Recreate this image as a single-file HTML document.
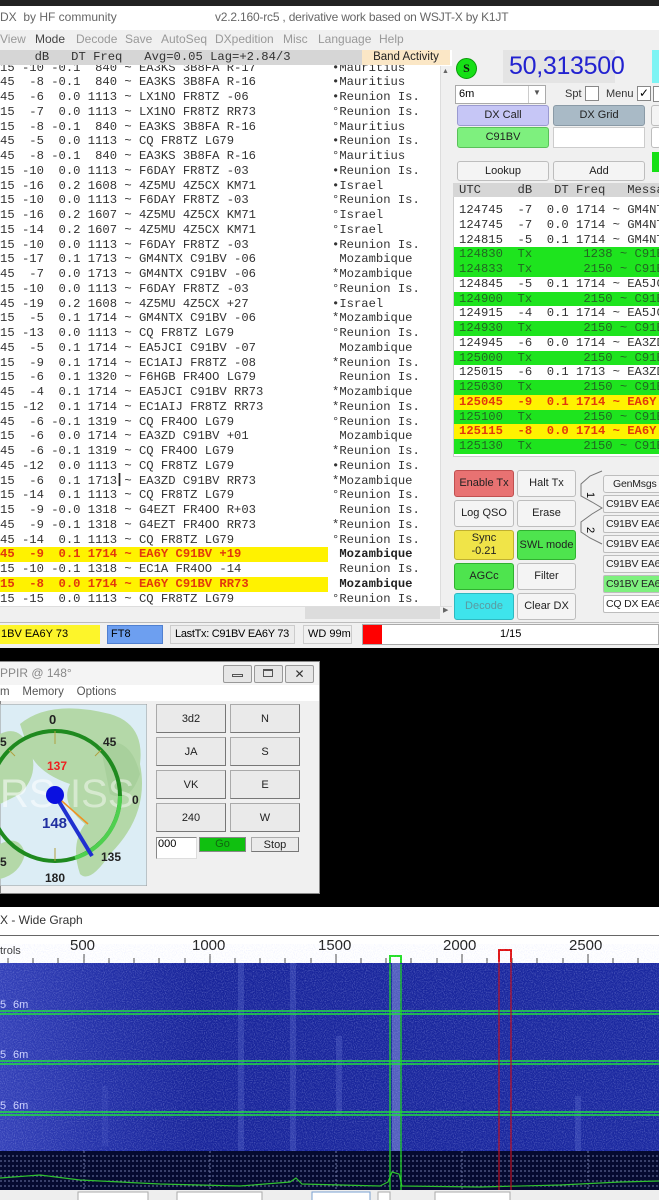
<!DOCTYPE html>
<html><head><meta charset="utf-8">
<style>
*{margin:0;padding:0;box-sizing:border-box}
body{width:659px;height:1200px;overflow:hidden;background:#000;position:relative;font-family:"Liberation Sans",sans-serif;}
.a{position:absolute;white-space:nowrap}
.mono{font-family:"Liberation Mono",monospace;font-size:12.2px;white-space:pre;color:#333;}
.mono .a{white-space:pre}
.row{position:absolute;height:14.75px;line-height:14.75px;}
.btn{position:absolute;border:1px solid #bdbdbd;border-radius:3px;background:#f4f4f4;font-size:11px;color:#222;display:flex;align-items:center;justify-content:center;text-align:center;line-height:13px;white-space:nowrap;overflow:hidden}
.gm{font-size:10.5px;letter-spacing:-0.2px}
.wb{position:absolute;background:#eaeaea;border:1px solid #aaa;border-right-color:#777;border-bottom-color:#777;font-size:11px;display:flex;align-items:center;justify-content:center;color:#222}
</style></head><body>

<div class="a" style="left:0;top:0;width:659px;height:6px;background:#222"></div>
<div class="a" style="left:0;top:6px;width:659px;height:642px;background:#f0f0f0"></div>
<div class="a" style="left:0;top:6px;width:659px;height:24px;background:#fff"></div>
<div class="a" style="left:0;top:10px;font-size:12px;color:#666">DX&nbsp; by HF community</div>
<div class="a" style="left:215px;top:10px;font-size:12px;color:#666;letter-spacing:-0.2px">v2.2.160-rc5 , derivative work based on WSJT-X by K1JT</div>
<div class="a" style="left:0;top:32px;font-size:12px;color:#999">
<span style="position:absolute;left:0">View</span><span style="position:absolute;left:35px;color:#444">Mode</span><span style="position:absolute;left:76px">Decode</span><span style="position:absolute;left:125px">Save</span><span style="position:absolute;left:161px">AutoSeq</span><span style="position:absolute;left:215px">DXpedition</span><span style="position:absolute;left:283px">Misc</span><span style="position:absolute;left:318px">Language</span><span style="position:absolute;left:379px">Help</span></div>

<div class="a" style="left:0;top:50px;width:452px;height:570px;background:#fff"></div>
<div class="a" style="left:0;top:50px;width:450px;height:15px;background:#d6d6d6"></div>
<div class="a mono" style="left:-2px;top:50px;line-height:15px">     dB   DT Freq   Avg=0.05 Lag=+2.84/3</div>
<div class="a" style="left:362px;top:50px;width:88px;height:15px;background:#fbe7c6;font-size:11.5px;line-height:15px;text-align:center;color:#222">Band Activity</div>
<div class="a" style="left:440px;top:66px;width:12px;height:540px;background:#f0f0f0;border-left:1px solid #ddd"></div>
<div class="a" style="left:442px;top:68px;font-size:7px;color:#666">▲</div>
<div class="a" style="left:0;top:606px;width:452px;height:14px;background:#f0f0f0;border-top:1px solid #ddd"></div>
<div class="a" style="left:305px;top:607px;width:135px;height:12px;background:#dcdcdc"></div>
<div class="a" style="left:443px;top:606px;font-size:7px;color:#666">▶</div>

<div class="a" style="left:0;top:65px;width:440px;height:541px;overflow:hidden">
<div style="position:relative;top:-4.4px">
<div class="row mono" style="top:0">15 -10 -0.1  840 ~ EA3KS 3B8FA R-17<span class="a" style="left:332px">•Mauritius</span></div>
<div class="row mono" style="top:14.75px">45  -8 -0.1  840 ~ EA3KS 3B8FA R-16<span class="a" style="left:332px">•Mauritius</span></div>
<div class="row mono" style="top:29.5px">45  -6  0.0 1113 ~ LX1NO FR8TZ -06<span class="a" style="left:332px">•Reunion Is.</span></div>
<div class="row mono" style="top:44.25px">15  -7  0.0 1113 ~ LX1NO FR8TZ RR73<span class="a" style="left:332px">°Reunion Is.</span></div>
<div class="row mono" style="top:59px">15  -8 -0.1  840 ~ EA3KS 3B8FA R-16<span class="a" style="left:332px">°Mauritius</span></div>
<div class="row mono" style="top:73.75px">45  -5  0.0 1113 ~ CQ FR8TZ LG79<span class="a" style="left:332px">•Reunion Is.</span></div>
<div class="row mono" style="top:88.5px">45  -8 -0.1  840 ~ EA3KS 3B8FA R-16<span class="a" style="left:332px">°Mauritius</span></div>
<div class="row mono" style="top:103.25px">15 -10  0.0 1113 ~ F6DAY FR8TZ -03<span class="a" style="left:332px">•Reunion Is.</span></div>
<div class="row mono" style="top:118px">15 -16  0.2 1608 ~ 4Z5MU 4Z5CX KM71<span class="a" style="left:332px">•Israel</span></div>
<div class="row mono" style="top:132.75px">15 -10  0.0 1113 ~ F6DAY FR8TZ -03<span class="a" style="left:332px">°Reunion Is.</span></div>
<div class="row mono" style="top:147.5px">15 -16  0.2 1607 ~ 4Z5MU 4Z5CX KM71<span class="a" style="left:332px">°Israel</span></div>
<div class="row mono" style="top:162.25px">15 -14  0.2 1607 ~ 4Z5MU 4Z5CX KM71<span class="a" style="left:332px">°Israel</span></div>
<div class="row mono" style="top:177px">15 -10  0.0 1113 ~ F6DAY FR8TZ -03<span class="a" style="left:332px">•Reunion Is.</span></div>
<div class="row mono" style="top:191.75px">15 -17  0.1 1713 ~ GM4NTX C91BV -06<span class="a" style="left:332px"> Mozambique</span></div>
<div class="row mono" style="top:206.5px">45  -7  0.0 1713 ~ GM4NTX C91BV -06<span class="a" style="left:332px">*Mozambique</span></div>
<div class="row mono" style="top:221.25px">15 -10  0.0 1113 ~ F6DAY FR8TZ -03<span class="a" style="left:332px">°Reunion Is.</span></div>
<div class="row mono" style="top:236px">45 -19  0.2 1608 ~ 4Z5MU 4Z5CX +27<span class="a" style="left:332px">•Israel</span></div>
<div class="row mono" style="top:250.75px">15  -5  0.1 1714 ~ GM4NTX C91BV -06<span class="a" style="left:332px">*Mozambique</span></div>
<div class="row mono" style="top:265.5px">15 -13  0.0 1113 ~ CQ FR8TZ LG79<span class="a" style="left:332px">°Reunion Is.</span></div>
<div class="row mono" style="top:280.25px">45  -5  0.1 1714 ~ EA5JCI C91BV -07<span class="a" style="left:332px"> Mozambique</span></div>
<div class="row mono" style="top:295px">15  -9  0.1 1714 ~ EC1AIJ FR8TZ -08<span class="a" style="left:332px">*Reunion Is.</span></div>
<div class="row mono" style="top:309.75px">15  -6  0.1 1320 ~ F6HGB FR4OO LG79<span class="a" style="left:332px"> Reunion Is.</span></div>
<div class="row mono" style="top:324.5px">45  -4  0.1 1714 ~ EA5JCI C91BV RR73<span class="a" style="left:332px">*Mozambique</span></div>
<div class="row mono" style="top:339.25px">15 -12  0.1 1714 ~ EC1AIJ FR8TZ RR73<span class="a" style="left:332px">*Reunion Is.</span></div>
<div class="row mono" style="top:354px">45  -6 -0.1 1319 ~ CQ FR4OO LG79<span class="a" style="left:332px">°Reunion Is.</span></div>
<div class="row mono" style="top:368.75px">15  -6  0.0 1714 ~ EA3ZD C91BV +01<span class="a" style="left:332px"> Mozambique</span></div>
<div class="row mono" style="top:383.5px">45  -6 -0.1 1319 ~ CQ FR4OO LG79<span class="a" style="left:332px">*Reunion Is.</span></div>
<div class="row mono" style="top:398.25px">45 -12  0.0 1113 ~ CQ FR8TZ LG79<span class="a" style="left:332px">•Reunion Is.</span></div>
<div class="row mono" style="top:413px">15  -6  0.1 1713 ~ EA3ZD C91BV RR73<span class="a" style="left:332px">*Mozambique</span></div>
<div class="row mono" style="top:427.75px">15 -14  0.1 1113 ~ CQ FR8TZ LG79<span class="a" style="left:332px">°Reunion Is.</span></div>
<div class="row mono" style="top:442.5px">15  -9 -0.0 1318 ~ G4EZT FR4OO R+03<span class="a" style="left:332px"> Reunion Is.</span></div>
<div class="row mono" style="top:457.25px">45  -9 -0.1 1318 ~ G4EZT FR4OO RR73<span class="a" style="left:332px">*Reunion Is.</span></div>
<div class="row mono" style="top:472px">45 -14  0.1 1113 ~ CQ FR8TZ LG79<span class="a" style="left:332px">°Reunion Is.</span></div>
<div class="row mono" style="top:486.75px;left:0;width:328px;background:#fff200;color:#e2380c;font-weight:bold">45  -9  0.1 1714 ~ EA6Y C91BV +19<span class="a" style="left:332px;color:#222"> Mozambique</span></div>
<div class="row mono" style="top:501.5px">15 -10 -0.1 1318 ~ EC1A FR4OO -14<span class="a" style="left:332px"> Reunion Is.</span></div>
<div class="row mono" style="top:516.25px;left:0;width:328px;background:#fff200;color:#e2380c;font-weight:bold">15  -8  0.0 1714 ~ EA6Y C91BV RR73<span class="a" style="left:332px;color:#222"> Mozambique</span></div>
<div class="row mono" style="top:531px">15 -15  0.0 1113 ~ CQ FR8TZ LG79<span class="a" style="left:332px">°Reunion Is.</span></div>
</div></div>
<div class="a" style="left:117px;top:470px;font-size:18px;color:#222">I</div>

<div class="a" style="left:456px;top:58px;width:21px;height:21px;border-radius:50%;background:#16e016;border:1px solid #0a9a0a;font:bold 12px 'Liberation Serif',serif;color:#111;text-align:center;line-height:19px">S</div>
<div class="a" style="left:503px;top:50px;width:112px;height:33px;background:#e4e4e4"></div>
<div class="a" style="left:509px;top:52px;font-size:25px;color:#2222d0;letter-spacing:-0.3px">50,313500</div>
<div class="a" style="left:652px;top:50px;width:7px;height:33px;background:#7ef4f4"></div>
<div class="a" style="left:455px;top:85px;width:91px;height:19px;background:#fff;border:1px solid #aaa;font-size:11px;line-height:17px;padding-left:3px">6m</div>
<div class="a" style="left:528px;top:86px;width:1px;height:17px;background:#ccc"></div>
<div class="a" style="left:533px;top:88px;font-size:8px;color:#555">▼</div>
<div class="a" style="left:565px;top:88px;font-size:11px;color:#333">Spt</div>
<div class="a" style="left:585px;top:86px;width:14px;height:15px;background:#fff;border:1px solid #888"></div>
<div class="a" style="left:606px;top:88px;font-size:11px;color:#333">Menu</div>
<div class="a" style="left:637px;top:86px;width:14px;height:15px;background:#fff;border:1px solid #888;font-size:12px;line-height:13px;text-align:center">✓</div>
<div class="a" style="left:653px;top:86px;width:8px;height:16px;background:#fff;border:1px solid #888"></div>
<div class="btn" style="left:457px;top:105px;width:92px;height:21px;background:#c6c6f6;border-color:#9a9ad0">DX Call</div>
<div class="btn" style="left:553px;top:105px;width:92px;height:21px;background:#a9bac6;border-color:#8a9aa6">DX Grid</div>
<div class="btn" style="left:457px;top:127px;width:92px;height:21px;background:#7ef07e;border-color:#5ac05a">C91BV</div>
<div class="a" style="left:553px;top:127px;width:92px;height:21px;background:#fff;border:1px solid #ccc"></div>
<div class="btn" style="left:651px;top:105px;width:10px;height:21px"></div>
<div class="btn" style="left:651px;top:127px;width:10px;height:21px;background:#fff"></div>
<div class="a" style="left:652px;top:152px;width:8px;height:20px;background:#16e016"></div>
<div class="btn" style="left:457px;top:161px;width:92px;height:20px">Lookup</div>
<div class="btn" style="left:553px;top:161px;width:92px;height:20px">Add</div>

<div class="a" style="left:453px;top:183px;width:206px;height:273px;background:#fff;border-left:1px solid #ccc"></div>
<div class="a" style="left:453px;top:183px;width:206px;height:14px;background:#d6d6d6"></div>
<div class="a mono" style="left:459px;top:183px;line-height:14px">UTC     dB   DT Freq   Message</div>
<div class="a" style="left:454px;top:198px;width:205px;height:256px;overflow:hidden">
<div style="position:relative;left:5px;top:5.1px">
<div class="row mono" style="top:0;left:-5px;width:210px;padding-left:5px">124745  -7  0.0 1714 ~ GM4NTX C91BV</div>
<div class="row mono" style="top:14.75px;left:-5px;width:210px;padding-left:5px">124745  -7  0.0 1714 ~ GM4NTX C91BV</div>
<div class="row mono" style="top:29.5px;left:-5px;width:210px;padding-left:5px">124815  -5  0.1 1714 ~ GM4NTX C91BV</div>
<div class="row mono" style="top:44.25px;left:-5px;width:210px;padding-left:5px;background:#1ee41e;color:#226622">124830  Tx       1238 ~ C91BV EA6Y</div>
<div class="row mono" style="top:59px;left:-5px;width:210px;padding-left:5px;background:#1ee41e;color:#226622">124833  Tx       2150 ~ C91BV EA6Y</div>
<div class="row mono" style="top:73.75px;left:-5px;width:210px;padding-left:5px">124845  -5  0.1 1714 ~ EA5JCI C91BV</div>
<div class="row mono" style="top:88.5px;left:-5px;width:210px;padding-left:5px;background:#1ee41e;color:#226622">124900  Tx       2150 ~ C91BV EA6Y</div>
<div class="row mono" style="top:103.25px;left:-5px;width:210px;padding-left:5px">124915  -4  0.1 1714 ~ EA5JCI C91BV</div>
<div class="row mono" style="top:118px;left:-5px;width:210px;padding-left:5px;background:#1ee41e;color:#226622">124930  Tx       2150 ~ C91BV EA6Y</div>
<div class="row mono" style="top:132.75px;left:-5px;width:210px;padding-left:5px">124945  -6  0.0 1714 ~ EA3ZD C91BV</div>
<div class="row mono" style="top:147.5px;left:-5px;width:210px;padding-left:5px;background:#1ee41e;color:#226622">125000  Tx       2150 ~ C91BV EA6Y</div>
<div class="row mono" style="top:162.25px;left:-5px;width:210px;padding-left:5px">125015  -6  0.1 1713 ~ EA3ZD C91BV</div>
<div class="row mono" style="top:177px;left:-5px;width:210px;padding-left:5px;background:#1ee41e;color:#226622">125030  Tx       2150 ~ C91BV EA6Y</div>
<div class="row mono" style="top:191.75px;left:-5px;width:210px;padding-left:5px;background:#fff200;color:#e2380c;font-weight:bold">125045  -9  0.1 1714 ~ EA6Y C91BV</div>
<div class="row mono" style="top:206.5px;left:-5px;width:210px;padding-left:5px;background:#1ee41e;color:#226622">125100  Tx       2150 ~ C91BV EA6Y</div>
<div class="row mono" style="top:221.25px;left:-5px;width:210px;padding-left:5px;background:#fff200;color:#e2380c;font-weight:bold">125115  -8  0.0 1714 ~ EA6Y C91BV</div>
<div class="row mono" style="top:236px;left:-5px;width:210px;padding-left:5px;background:#1ee41e;color:#226622">125130  Tx       2150 ~ C91BV EA6Y</div>
</div></div>
<div class="a" style="left:453px;top:456px;width:206px;height:8px;background:#f0f0f0;border-top:1px solid #ccc"></div>

<div class="btn" style="left:454px;top:470px;width:60px;height:27px;background:#e87272;border-color:#c05050">Enable Tx</div>
<div class="btn" style="left:517px;top:470px;width:59px;height:27px">Halt Tx</div>
<div class="btn" style="left:454px;top:500px;width:60px;height:27px">Log QSO</div>
<div class="btn" style="left:517px;top:500px;width:59px;height:27px">Erase</div>
<div class="btn" style="left:454px;top:530px;width:60px;height:30px;background:#f0e448;border-color:#c0b030">Sync<br>-0.21</div>
<div class="btn" style="left:517px;top:530px;width:59px;height:30px;background:#4ee44e;border-color:#30b030">SWL mode</div>
<div class="btn" style="left:454px;top:563px;width:60px;height:27px;background:#4ee44e;border-color:#30b030">AGCc</div>
<div class="btn" style="left:517px;top:563px;width:59px;height:27px">Filter</div>
<div class="btn" style="left:454px;top:593px;width:60px;height:27px;background:#3ee4ec;border-color:#30b8c0;color:#5a9aa0">Decode</div>
<div class="btn" style="left:517px;top:593px;width:59px;height:27px">Clear DX</div>
<svg class="a" style="left:578px;top:470px" width="26" height="96"><path d="M24 1 L12 6 L3 14 L3 26 L14 32 L24 38 L14 44 L3 52 L3 62 L12 68 L24 74" fill="none" stroke="#777" stroke-width="1"/><text x="12" y="25" font-size="11" font-family="Liberation Sans" transform="rotate(90 12 22)">1</text><text x="12" y="60" font-size="11" font-family="Liberation Sans" transform="rotate(90 12 57)">2</text></svg>
<div class="btn gm" style="left:603px;top:475px;width:60px;height:18px;justify-content:flex-start;padding-left:9px">GenMsgs</div>
<div class="btn gm" style="left:603px;top:495px;width:60px;height:18px;justify-content:flex-start;padding-left:2px;border-radius:2px">C91BV EA6Y</div>
<div class="btn gm" style="left:603px;top:515px;width:60px;height:18px;justify-content:flex-start;padding-left:2px;border-radius:2px">C91BV EA6Y</div>
<div class="btn gm" style="left:603px;top:535px;width:60px;height:18px;justify-content:flex-start;padding-left:2px;border-radius:2px">C91BV EA6Y</div>
<div class="btn gm" style="left:603px;top:555px;width:60px;height:18px;justify-content:flex-start;padding-left:2px;border-radius:2px">C91BV EA6Y</div>
<div class="btn gm" style="left:603px;top:575px;width:60px;height:18px;justify-content:flex-start;padding-left:2px;border-radius:2px;background:#7ef07e">C91BV EA6Y</div>
<div class="btn gm" style="left:603px;top:595px;width:60px;height:18px;justify-content:flex-start;padding-left:2px;border-radius:2px;background:#fff">CQ DX EA6Y</div>

<div class="a" style="left:0;top:622px;width:659px;height:1px;background:#bbb"></div>
<div class="a" style="left:0;top:625px;width:100px;height:19px;background:#fdf52a;font-size:11px;line-height:19px;padding-left:1px">1BV EA6Y 73</div>
<div class="a" style="left:107px;top:625px;width:56px;height:19px;background:#6d9ff0;font-size:11px;line-height:17px;padding-left:3px;border:1px solid #5080d0">FT8</div>
<div class="a" style="left:170px;top:625px;width:125px;height:19px;background:#ececec;border:1px solid #ccc;font-size:11px;line-height:17px;padding-left:4px;overflow:hidden;letter-spacing:-0.3px">LastTx: C91BV EA6Y 73</div>
<div class="a" style="left:303px;top:625px;width:49px;height:19px;border:1px solid #ccc;font-size:11px;line-height:17px;padding-left:4px;overflow:hidden">WD 99m</div>
<div class="a" style="left:362px;top:624px;width:297px;height:21px;background:#fff;border:1px solid #aaa"></div>
<div class="a" style="left:363px;top:625px;width:19px;height:19px;background:#f00"></div>
<div class="a" style="left:500px;top:628px;font-size:11px">1/15</div>

<div class="a" style="left:0;top:661px;width:320px;height:233px;background:#f0f0f0;border:1px solid #888"></div>
<div class="a" style="left:0;top:662px;width:319px;height:23px;background:#f4f4f4"></div>
<div class="a" style="left:0;top:666px;font-size:12px;color:#888">PPIR @ 148°</div>
<div class="a" style="left:223px;top:665px;width:29px;height:18px;border:1px solid #999;background:#e6e6e6;border-radius:2px"></div>
<div class="a" style="left:232px;top:674px;width:11px;height:3px;border:1px solid #555"></div>
<div class="a" style="left:254px;top:665px;width:29px;height:18px;border:1px solid #999;background:#e6e6e6;border-radius:2px"></div>
<div class="a" style="left:263px;top:669px;width:10px;height:8px;border:1px solid #555;border-top-width:2px"></div>
<div class="a" style="left:285px;top:665px;width:29px;height:18px;border:1px solid #999;background:#e6e6e6;border-radius:2px;font-size:12px;text-align:center;line-height:16px;color:#333">✕</div>
<div class="a" style="left:0;top:685px;width:319px;height:16px;background:#fff"></div>
<div class="a" style="left:0;top:686px;font-size:11.5px;color:#555">m&nbsp;&nbsp;&nbsp; Memory&nbsp;&nbsp;&nbsp; Options</div>
<svg class="a" style="left:0;top:704px" width="147" height="182">
<rect width="147" height="182" fill="#dcedf5" stroke="#999"/>
<path d="M20 20 Q50 -5 110 10 Q145 20 140 60 Q150 110 110 150 Q90 180 80 170 Q70 140 85 120 Q60 100 70 80 Q40 70 30 50 Z" fill="#b4d8a8"/>
<path d="M0 30 Q20 20 30 45 Q40 70 20 90 L0 100 Z" fill="#b4d8a8"/>
<path d="M0 140 Q20 130 25 150 Q20 170 0 175 Z" fill="#b4d8a8"/>
<path d="M100 40 Q130 30 140 70 Q130 100 110 90 Z" fill="#a8d09c"/>
<text x="0" y="103" font-size="40" fill="#fff" fill-opacity="0.55" font-family="Liberation Sans">RS</text>
<text x="70" y="103" font-size="40" fill="#fff" fill-opacity="0.45" font-family="Liberation Sans">ISS</text>
<circle cx="55" cy="92" r="65" fill="none" stroke="#1f8a1f" stroke-width="4"/>
<path d="M120 92 A65 65 0 0 1 75 154" fill="none" stroke="#4fd04f" stroke-width="4"/>
<g stroke="#b0a040" stroke-width="1"><line x1="55" y1="27" x2="55" y2="40"/><line x1="55" y1="144" x2="55" y2="157"/><line x1="101" y1="46" x2="95" y2="52"/><line x1="9" y1="46" x2="15" y2="52"/></g>
<line x1="55" y1="91" x2="92" y2="152" stroke="#2030d0" stroke-width="4"/>
<line x1="55" y1="91" x2="88" y2="120" stroke="#f09020" stroke-width="1.5"/>
<circle cx="55" cy="91" r="9" fill="#0a10e0"/>
<text x="49" y="20" font-size="13" font-weight="bold" fill="#222" font-family="Liberation Sans">0</text>
<text x="103" y="42" font-size="12" font-weight="bold" fill="#222" font-family="Liberation Sans">45</text>
<text x="132" y="100" font-size="12" font-weight="bold" fill="#222" font-family="Liberation Sans">0</text>
<text x="101" y="157" font-size="12" font-weight="bold" fill="#222" font-family="Liberation Sans">135</text>
<text x="45" y="178" font-size="12" font-weight="bold" fill="#222" font-family="Liberation Sans">180</text>
<text x="47" y="66" font-size="12" font-weight="bold" fill="#ee2020" font-family="Liberation Sans">137</text>
<text x="42" y="124" font-size="15" font-weight="bold" fill="#2030a0" font-family="Liberation Sans">148</text>
<text x="0" y="42" font-size="12" font-weight="bold" fill="#222" font-family="Liberation Sans">5</text>
<text x="0" y="162" font-size="12" font-weight="bold" fill="#222" font-family="Liberation Sans">5</text>
</svg>
<div class="wb" style="left:156px;top:704px;width:70px;height:29px">3d2</div>
<div class="wb" style="left:230px;top:704px;width:70px;height:29px">N</div>
<div class="wb" style="left:156px;top:737px;width:70px;height:29px">JA</div>
<div class="wb" style="left:230px;top:737px;width:70px;height:29px">S</div>
<div class="wb" style="left:156px;top:770px;width:70px;height:29px">VK</div>
<div class="wb" style="left:230px;top:770px;width:70px;height:29px">E</div>
<div class="wb" style="left:156px;top:803px;width:70px;height:29px">240</div>
<div class="wb" style="left:230px;top:803px;width:70px;height:29px">W</div>
<div class="a" style="left:156px;top:837px;width:41px;height:22px;background:#fff;border:1px solid #888;border-right-color:#ddd;border-bottom-color:#ddd;font-size:11px;padding-left:1px">000</div>
<div class="a" style="left:199px;top:837px;width:47px;height:15px;background:#10c010;border:1px solid #888;font-size:11px;text-align:center;line-height:13px;color:#116611">Go</div>
<div class="wb" style="left:251px;top:837px;width:48px;height:15px">Stop</div>

<div class="a" style="left:0;top:907px;width:659px;height:293px;background:#fff"></div>
<div class="a" style="left:0;top:913px;font-size:12px;color:#333">X - Wide Graph</div>
<div class="a" style="left:0;top:935px;width:659px;height:1px;background:#666"></div>
<div class="a" style="left:0;top:945px;font-size:11px;color:#333">trols</div>
<div class="a" style="left:70px;top:937px;font-size:15px;color:#222">500</div>
<div class="a" style="left:192px;top:937px;font-size:15px;color:#222">1000</div>
<div class="a" style="left:318px;top:937px;font-size:15px;color:#222">1500</div>
<div class="a" style="left:443px;top:937px;font-size:15px;color:#222">2000</div>
<div class="a" style="left:569px;top:937px;font-size:15px;color:#222">2500</div>
<svg class="a" style="left:0;top:936px" width="659" height="264">
<g stroke="#444" stroke-width="1">
<line x1="84" y1="18" x2="84" y2="27"/><line x1="210" y1="18" x2="210" y2="27"/><line x1="336" y1="18" x2="336" y2="27"/><line x1="462" y1="18" x2="462" y2="27"/><line x1="588" y1="18" x2="588" y2="27"/>
<line x1="8" y1="22" x2="8" y2="27"/><line x1="33" y1="22" x2="33" y2="27"/><line x1="58" y1="22" x2="58" y2="27"/><line x1="109" y1="22" x2="109" y2="27"/><line x1="134" y1="22" x2="134" y2="27"/><line x1="159" y1="22" x2="159" y2="27"/><line x1="185" y1="22" x2="185" y2="27"/><line x1="235" y1="22" x2="235" y2="27"/><line x1="260" y1="22" x2="260" y2="27"/><line x1="285" y1="22" x2="285" y2="27"/><line x1="311" y1="22" x2="311" y2="27"/><line x1="361" y1="22" x2="361" y2="27"/><line x1="386" y1="22" x2="386" y2="27"/><line x1="411" y1="22" x2="411" y2="27"/><line x1="437" y1="22" x2="437" y2="27"/><line x1="487" y1="22" x2="487" y2="27"/><line x1="512" y1="22" x2="512" y2="27"/><line x1="537" y1="22" x2="537" y2="27"/><line x1="563" y1="22" x2="563" y2="27"/><line x1="613" y1="22" x2="613" y2="27"/><line x1="638" y1="22" x2="638" y2="27"/>
</g>
<path d="M390 28 V20 H401 V28" fill="none" stroke="#20e020" stroke-width="2"/>
<path d="M499 26 V14 H511 V26" fill="none" stroke="#e01010" stroke-width="2"/>
<defs>
<linearGradient id="wf" x1="0" x2="1"><stop offset="0" stop-color="#3340b8"/><stop offset="0.15" stop-color="#2330a8"/><stop offset="0.3" stop-color="#18249a"/><stop offset="1" stop-color="#1a28a0"/></linearGradient>
<filter id="n"><feTurbulence type="fractalNoise" baseFrequency="0.9" numOctaves="1" seed="3"/><feColorMatrix values="0 0 0 0 0.6  0 0 0 0 0.65  0 0 0 0 1  0 0 0 1.4 -0.6"/></filter>
</defs>
<rect x="0" y="27" width="659" height="188" fill="url(#wf)"/>
<rect x="0" y="27" width="659" height="188" filter="url(#n)" opacity="0.55"/>
<g fill="#8090e8" opacity="0.22">
<rect x="238" y="27" width="6" height="188"/><rect x="290" y="27" width="6" height="188"/><rect x="336" y="100" width="6" height="80"/><rect x="575" y="160" width="6" height="55"/><rect x="102" y="150" width="6" height="60" opacity="0.5"/>
</g>
<rect x="392" y="27" width="8" height="188" fill="#a8b4f0" opacity="0.4"/>
<g stroke="#20e040" stroke-width="1.5"><line x1="0" y1="75" x2="659" y2="75"/><line x1="0" y1="78" x2="659" y2="78"/><line x1="0" y1="125" x2="659" y2="125"/><line x1="0" y1="128" x2="659" y2="128"/><line x1="0" y1="176" x2="659" y2="176"/><line x1="0" y1="179" x2="659" y2="179"/></g>
<g font-size="11" fill="#cfd4ff" font-family="Liberation Sans"><text x="13" y="72">6m</text><text x="13" y="122">6m</text><text x="13" y="173">6m</text><text x="0" y="72">5</text><text x="0" y="122">5</text><text x="0" y="173">5</text></g>
<rect x="0" y="215" width="659" height="39" fill="#050a30"/>
<g stroke="#8890c0" stroke-width="1" stroke-dasharray="2 2" opacity="0.8">
<line x1="0" y1="220" x2="659" y2="220"/><line x1="0" y1="225" x2="659" y2="225"/><line x1="0" y1="230" x2="659" y2="230"/><line x1="0" y1="235" x2="659" y2="235"/><line x1="0" y1="240" x2="659" y2="240"/><line x1="0" y1="245" x2="659" y2="245"/><line x1="0" y1="250" x2="659" y2="250"/>
<line x1="84" y1="215" x2="84" y2="254"/><line x1="210" y1="215" x2="210" y2="254"/><line x1="336" y1="215" x2="336" y2="254"/><line x1="462" y1="215" x2="462" y2="254"/><line x1="588" y1="215" x2="588" y2="254"/>
</g>
<polyline points="0,242 40,239 80,244 160,248 240,250 290,246 296,242 302,248 380,250 388,246 392,236 399,238 402,250 480,251 560,249 620,246 659,245" fill="none" stroke="#30c030" stroke-width="1.2"/>
<line x1="390" y1="28" x2="390" y2="254" stroke="#20e020" stroke-width="1.2"/>
<line x1="401" y1="28" x2="401" y2="254" stroke="#20e020" stroke-width="1.2"/>
<line x1="499" y1="26" x2="499" y2="254" stroke="#c01020" stroke-width="1.2"/>
<line x1="511" y1="26" x2="511" y2="254" stroke="#c01020" stroke-width="1.2"/>
<rect x="0" y="254" width="659" height="10" fill="#eeeeee"/>
<rect x="78" y="256" width="70" height="10" fill="#fff" stroke="#aaa"/><rect x="177" y="256" width="85" height="10" fill="#fff" stroke="#aaa"/><rect x="312" y="256" width="58" height="10" fill="#fff" stroke="#7aa0d0"/><rect x="378" y="256" width="12" height="10" fill="#fff" stroke="#aaa"/><rect x="435" y="256" width="75" height="10" fill="#fff" stroke="#aaa"/>
</svg>
</body></html>
